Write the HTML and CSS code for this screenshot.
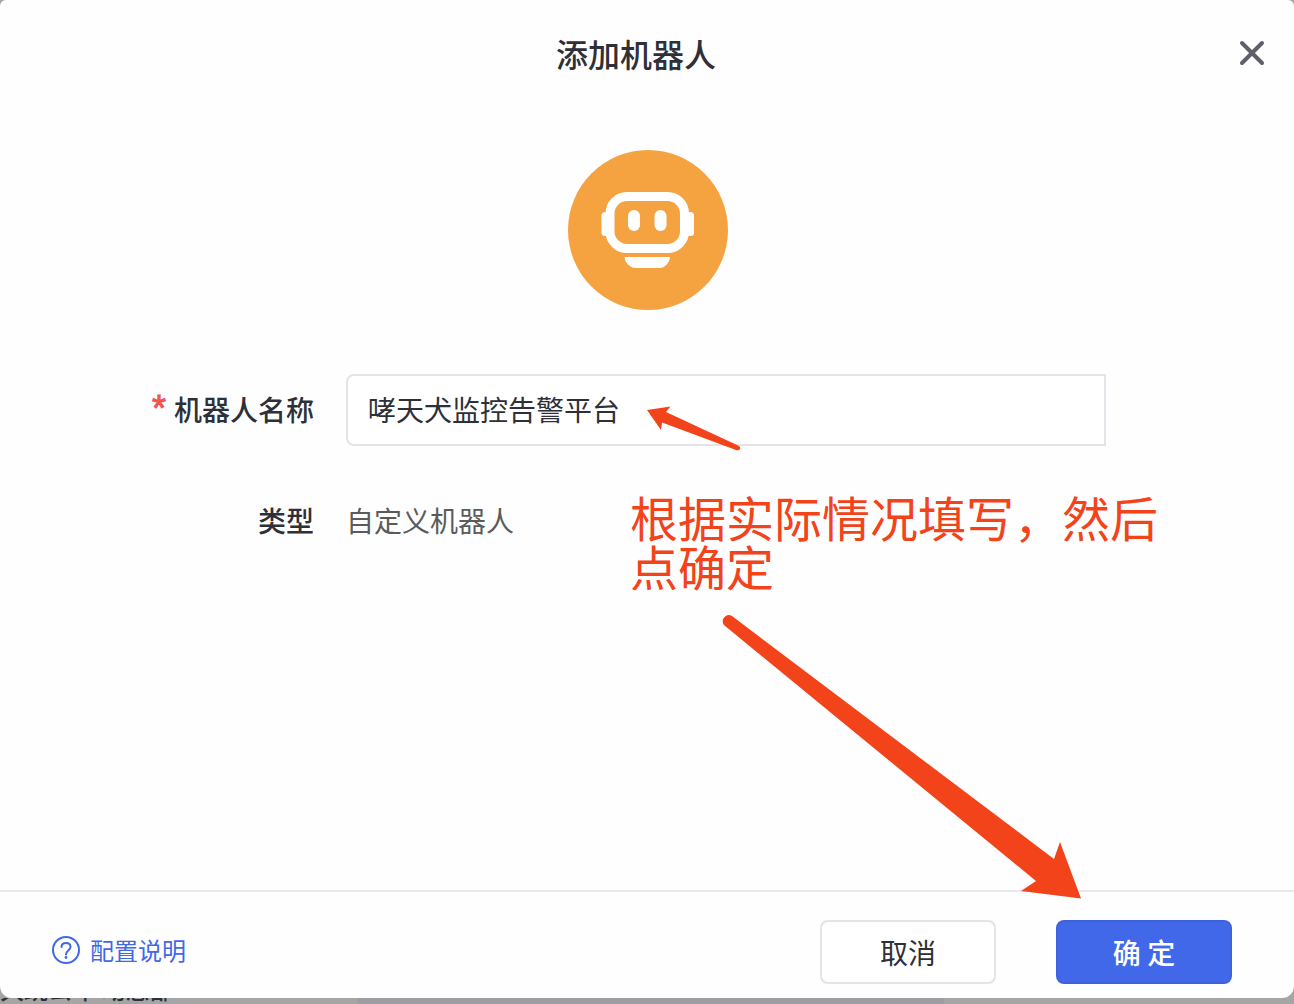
FILE: index.html
```html
<!DOCTYPE html>
<html lang="zh-CN">
<head>
<meta charset="utf-8">
<title>添加机器人</title>
<meta name="viewport" content="width=device-width, initial-scale=1">
<link rel="stylesheet" href="styles.css">
</head>
<body>
<form class="dialog">
  <header class="dialog-header">
    <h1 class="dialog-title">添加机器人</h1>
    <button class="close" type="button" aria-label="关闭">
      <svg viewBox="0 0 28 28" width="28" height="28" fill="none" stroke="#5f5f6b" stroke-width="4" stroke-linecap="round"><path d="M4 4 24 24M24 4 4 24"/></svg>
    </button>
  </header>
  <main class="dialog-body">
    <svg class="avatar" viewBox="0 0 160 160" role="img" aria-label="机器人头像">
      <circle cx="80" cy="80" r="80" fill="#f5a341"/>
      <rect x="33.500" y="62" width="12" height="24" rx="3.500" fill="#fff"/>
      <rect x="114" y="62" width="12" height="24" rx="3.500" fill="#fff"/>
      <rect x="42" y="46.500" width="74.500" height="52" rx="17" fill="#f5a341" stroke="#fff" stroke-width="9"/>
      <rect x="60" y="60" width="12" height="21" rx="6" fill="#fff"/>
      <rect x="86.500" y="60" width="12" height="21" rx="6" fill="#fff"/>
      <path d="M56.500 107H102C101.500 113 97 118 91 118H68C62 118 57 113 56.500 107Z" fill="#fff"/>
    </svg>
    <div class="fields">
      <label class="label" for="robot-name"><span class="required">*</span>机器人名称</label>
      <input class="name-input" id="robot-name" type="text" value="哮天犬监控告警平台" required>
      <span class="label">类型</span>
      <span class="value">自定义机器人</span>
    </div>
  </main>
  <footer class="dialog-footer">
    <a class="help" href="#">
      <svg viewBox="0 0 28 28" width="28" height="28" fill="none" stroke="#4168e8" stroke-width="2" stroke-linecap="round"><circle cx="14" cy="14" r="13"/><path d="M9.500 11C9.500 8.500 11.500 7 14 7S18.500 8.500 18.500 11C18.500 14 14 14.500 14 18.500"/><circle cx="14" cy="21.500" r="1.400" fill="#4168e8" stroke="none"/></svg>
      配置说明
    </a>
    <div class="actions">
      <button class="button" type="button">取消</button>
      <button class="button primary" type="submit">确 定</button>
    </div>
  </footer>
  <svg class="arrows" width="1294" height="998" fill="#f2431b" aria-hidden="true">
    <path d="M647 410 670.500 406.500 666 412 738 445.500Q741 447 740 449Q739 451 736 450L662 422.500 661 430Z"/>
    <path d="M732 616 1054 859 1060 842 1081 898.500 1021 891 1036 881 724.500 625.500Q722 623 723 619Q727 613 732 616Z"/>
  </svg>
  <p class="note">根据实际情况填写，然后点确定</p>
</form>
<div class="backdrop"><span class="behind">久跳公年 动态部</span></div>
</body>
</html>
```
FILE: styles.css
```css
* {
  box-sizing: border-box;
}

body {
  display: flex;
  flex-direction: column;
  min-height: 100vh;
  margin: 0;
  background: #a5a5a6;
  color: #2f3037;
  font-family: "Noto Sans CJK SC", sans-serif;
  font-size: 28px;
  line-height: 40px;
}

button,
input {
  font: inherit;
  color: inherit;
}

.dialog {
  position: relative;
  flex: 1;
  display: flex;
  flex-direction: column;
  border-radius: 6px 6px 12px 12px;
  background: #fefefe;
}

.dialog-header {
  display: flex;
  align-items: center;
  padding: 29px 28px 0 34px;
}

.dialog-title {
  flex: 1;
  margin: 0;
  font-size: 32px;
  line-height: 48px;
  font-weight: 500;
  text-align: center;
}

.close {
  display: flex;
  padding: 0;
  border: 0;
  background: none;
}

.dialog-body {
  flex: 1;
  display: flex;
  flex-direction: column;
  padding: 73px 0 40px;
}

.avatar {
  align-self: center;
  width: 162px;
  height: 160px;
  padding-left: 2px;
  margin-bottom: 64px;
}

.fields {
  display: grid;
  grid-template-columns: 314px 1fr;
  column-gap: 32px;
  row-gap: 54px;
  align-items: center;
  padding-right: 188px;
}

.label,
.value {
  padding-bottom: 2px;
}

.label {
  font-weight: 500;
  text-align: right;
}

.required {
  margin-right: 8px;
  color: #f2554f;
  font-family: "Liberation Sans", sans-serif;
  font-size: 36px;
  font-weight: 400;
  line-height: 28px;
  -webkit-text-stroke: 1px #f2554f;
}

.name-input {
  width: 100%;
  height: 72px;
  padding: 0 20px 2px;
  border: 2px solid #e3e3e9;
  border-radius: 8px 0 0 8px;
  background: #fff;
}

.value {
  color: #5b5b5b;
}

.dialog-footer {
  display: flex;
  align-items: center;
  justify-content: space-between;
  padding: 28px 62px 14px 52px;
  border-top: 2px solid #e8e8ee;
}

.help {
  display: flex;
  align-items: center;
  gap: 10px;
  padding-bottom: 4px;
  color: #4168e8;
  font-size: 24px;
  text-decoration: none;
}

.actions {
  display: flex;
  gap: 60px;
}

.button {
  width: 176px;
  height: 64px;
  border: 2px solid #e4e4e6;
  border-radius: 8px;
  background: #fff;
}

.primary {
  border-color: #3f62dc;
  background: #4168e8;
  color: #fff;
  font-weight: 500;
}

.arrows {
  position: absolute;
  top: 0;
  left: 0;
  pointer-events: none;
}

.note {
  position: absolute;
  top: 492px;
  left: 630px;
  width: 550px;
  margin: 0;
  color: #f2431b;
  font-size: 48px;
  line-height: 49px;
}

.backdrop {
  display: flex;
  align-items: flex-end;
  height: 6px;
  overflow: hidden;
  background: linear-gradient(90deg, #a5a5a5 358px, #9d9da3 358px 944px, #a5a5a5 944px);
}

.behind {
  font-size: 24px;
  line-height: 30px;
  font-weight: 500;
  white-space: pre;
}
```
